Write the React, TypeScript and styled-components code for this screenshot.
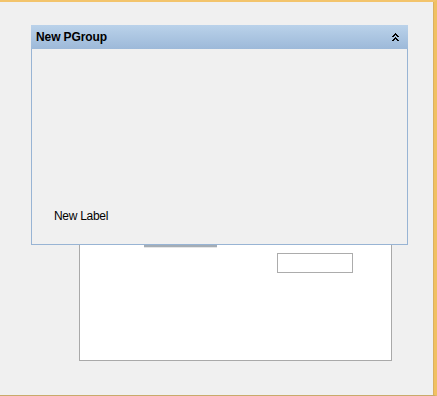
import React from "react";
import styled, { createGlobalStyle } from "styled-components";

const GlobalStyle = createGlobalStyle`
  html, body {
    margin: 0;
    padding: 0;
    background: #f0f0f0;
  }
  body {
    font-family: "Liberation Sans", Arial, sans-serif;
  }
`;

const Window = styled.div`
  position: relative;
  box-sizing: border-box;
  width: 437px;
  height: 396px;
  background: #f0f0f0;
  border-top: 2px solid #f3c46c;
  border-right: 3px solid #f0c162;
  border-bottom: 1px solid #c9aa6a;
  box-shadow: inset -1px 0 0 #dcb060;
  padding: 198px 0 0 79px;
`;

const Surface = styled.div`
  box-sizing: border-box;
  width: 313px;
  height: 161px;
  background: #ffffff;
  border: 1px solid #a9a9a9;
  display: flex;
  flex-direction: column;
`;

const TabLine = styled.div`
  margin: 44px 0 0 64px;
  width: 73px;
  height: 2px;
  background: #a4adb6;
  box-shadow: 0 1px 0 #e6e6e6;
`;

const TextBox = styled.div`
  box-sizing: border-box;
  margin: 6px 0 0 197px;
  width: 76px;
  height: 20px;
  border: 1px solid #acacac;
  background: #fff;
`;

const Group = styled.section`
  position: absolute;
  left: 31px;
  top: 23px;
  box-sizing: border-box;
  width: 377px;
  height: 220px;
  border: 1px solid #98b4d4;
  border-top: none;
  background: #f0f0f0;
  display: flex;
  flex-direction: column;
`;

const Header = styled.header`
  height: 24px;
  margin: 0 -1px;
  padding: 0 9px 0 5px;
  display: flex;
  align-items: center;
  justify-content: space-between;
  background: linear-gradient(#bad2ea, #9db9d9);
`;

const Title = styled.h3`
  margin: 0;
  font-size: 12px;
  font-weight: bold;
  color: #000;
  letter-spacing: -0.1px;
`;

const Body = styled.div`
  flex: 1;
  display: flex;
  flex-direction: column;
  justify-content: flex-end;
  padding: 0 0 21px 22px;
`;

const Label = styled.span`
  font-size: 12px;
  line-height: 14px;
  color: #000;
  letter-spacing: -0.3px;
`;

const Collapse = () => (
  <svg width="7" height="8" viewBox="0 0 7 8" shapeRendering="crispEdges">
    <path d="M3 0h1v1h1v1h1v1h1v1h-2v-1h-1v-1h-1v1h-1v1h-2v-1h1v-1h1z M3 4h1v1h1v1h1v1h1v1h-2v-1h-1v-1h-1v1h-1v1h-2v-1h1v-1h1z" fill="#000" />
  </svg>
);

const App = () => {
  return (
    <>
      <GlobalStyle />
      <Window>
        <Surface>
          <TabLine />
          <TextBox />
        </Surface>
        <Group>
          <Header>
            <Title>New PGroup</Title>
            <Collapse />
          </Header>
          <Body>
            <Label>New Label</Label>
          </Body>
        </Group>
      </Window>
    </>
  );
};

export default App;
